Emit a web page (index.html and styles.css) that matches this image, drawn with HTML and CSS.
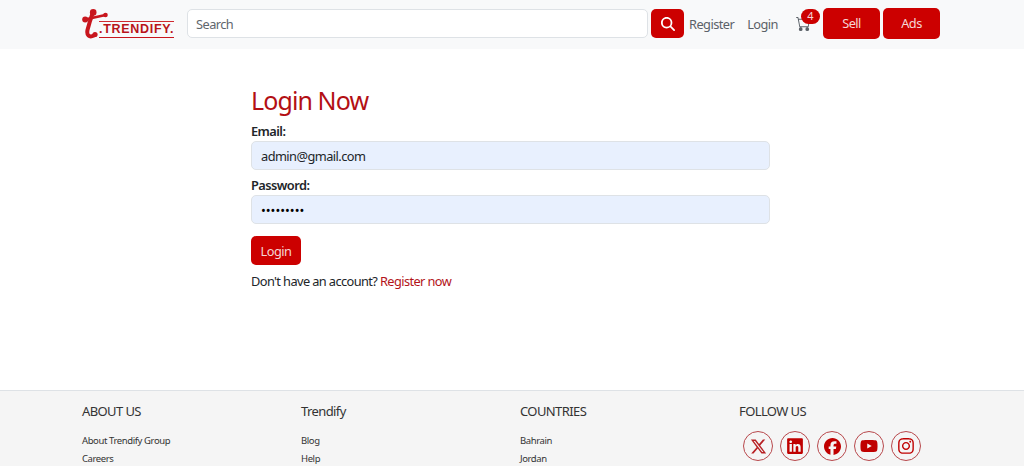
FILE: index.html
```html
<!DOCTYPE html>
<html lang="en">
<head>
<meta charset="utf-8">
<title>Login - Trendify</title>
<link rel="stylesheet" href="styles.css">
</head>
<body>
<header class="topbar">
  <a class="logo" href="#">
    <svg class="logo-mark" viewBox="0 0 26 30" width="26" height="30" aria-hidden="true">
      <path d="M11 3 L8 12 L5.500 21 C4.500 26 7 29 12 26.500" fill="none" stroke="#c8161d" stroke-width="4" stroke-linecap="round"/>
      <path d="M3 10.500 L23.500 6" fill="none" stroke="#c8161d" stroke-width="2.800" stroke-linecap="round"/>
      <circle cx="11.200" cy="3.400" r="3.300" fill="#c8161d"/>
      <circle cx="3.200" cy="10.500" r="3" fill="#c8161d"/>
      <circle cx="23.500" cy="6" r="2.300" fill="#c8161d"/>
      <circle cx="13" cy="25.500" r="2.600" fill="#c8161d"/>
    </svg>
    <span class="logo-word">.TRENDIFY.</span>
  </a>
  <form class="search">
    <input class="search-input" type="text" placeholder="Search">
    <button class="search-btn" type="button" aria-label="Search">
      <svg viewBox="0 0 512 512" width="14" height="14"><path fill="#fff" d="M416 208c0 45.900-14.900 88.300-40 122.700L502.600 457.400c12.500 12.500 12.500 32.800 0 45.300s-32.800 12.500-45.300 0L330.700 376c-34.400 25.200-76.800 40-122.700 40C93.100 416 0 322.900 0 208S93.100 0 208 0S416 93.100 416 208zM208 352a144 144 0 1 0 0-288 144 144 0 1 0 0 288z"/></svg>
    </button>
  </form>
  <nav class="nav">
    <a class="nav-link nav-link-wide" href="#">Register</a>
    <a class="nav-link" href="#">Login</a>
    <a class="cart" href="#" aria-label="Cart">
      <svg viewBox="0 0 16 16" width="15" height="15"><path fill="#5b6168" d="M0 1.500A.5.500 0 0 1 .5 1H2a.5.500 0 0 1 .485.379L2.890 3H14.500a.5.500 0 0 1 .491.592l-1.500 8A.5.500 0 0 1 13 12H4a.5.500 0 0 1-.491-.408L2.010 3.607 1.610 2H.5a.5.500 0 0 1-.5-.5zM3.102 4l1.313 7h8.170l1.313-7H3.102zM5 12a2 2 0 1 0 0 4 2 2 0 0 0 0-4zm7 0a2 2 0 1 0 0 4 2 2 0 0 0 0-4z"/></svg>
      <span class="badge">4</span>
    </a>
    <a class="nav-btn" href="#">Sell</a>
    <a class="nav-btn" href="#">Ads</a>
  </nav>
</header>

<main class="main">
  <h1 class="title">Login Now</h1>
  <form class="login">
    <label class="label" for="email">Email:</label>
    <input class="field" id="email" type="email" value="admin@gmail.com">
    <label class="label" for="pw">Password:</label>
    <input class="field field-secret" id="pw" type="password" value="123456789">
    <button class="submit" type="button">Login</button>
  </form>
  <p class="note">Don't have an account? <a class="note-link" href="#">Register now</a></p>
</main>

<footer class="footer">
  <div class="col">
    <h2 class="col-title">ABOUT US</h2>
    <a class="col-link" href="#">About Trendify Group</a>
    <a class="col-link" href="#">Careers</a>
  </div>
  <div class="col">
    <h2 class="col-title">Trendify</h2>
    <a class="col-link" href="#">Blog</a>
    <a class="col-link" href="#">Help</a>
  </div>
  <div class="col">
    <h2 class="col-title">COUNTRIES</h2>
    <a class="col-link" href="#">Bahrain</a>
    <a class="col-link" href="#">Jordan</a>
  </div>
  <div class="col">
    <h2 class="col-title">FOLLOW US</h2>
    <div class="socials">
      <a class="social" href="#" aria-label="X"><svg viewBox="0 0 512 512" width="17" height="17"><path fill="#b82024" d="M389.200 48h70.600L305.600 224.200 487 464H345L233.700 318.600 106.500 464H35.800L200.700 275.500 26.800 48H172.400L272.900 180.900 389.200 48zM364.400 421.800h39.100L151.100 88h-42L364.400 421.800z"/></svg></a>
      <a class="social" href="#" aria-label="LinkedIn"><svg viewBox="0 0 448 512" width="16" height="18"><path fill="#c00000" d="M416 32H31.900C14.300 32 0 46.500 0 64.300v383.400C0 465.500 14.300 480 31.900 480H416c17.600 0 32-14.500 32-32.300V64.300c0-17.800-14.400-32.300-32-32.300zM135.400 416H69V202.200h66.500V416zm-33.200-243c-21.300 0-38.500-17.300-38.500-38.500S80.900 96 102.200 96c21.200 0 38.500 17.300 38.500 38.500 0 21.300-17.200 38.500-38.500 38.500zm282.100 243h-66.400V312c0-24.800-.5-56.700-34.500-56.700-34.600 0-39.900 27-39.900 54.900V416h-66.400V202.200h63.700v29.200h.9c8.900-16.800 30.600-34.500 62.900-34.500 67.200 0 79.700 44.300 79.700 101.900V416z"/></svg></a>
      <a class="social" href="#" aria-label="Facebook"><svg viewBox="0 0 512 512" width="17" height="17"><path fill="#c00000" d="M512 256C512 114.600 397.400 0 256 0S0 114.600 0 256C0 376 82.700 476.800 194.200 504.500V334.200H141.400V256h52.800V222.300c0-87.100 39.400-127.500 125-127.500c16.200 0 44.200 3.200 55.700 6.400V172c-6-.6-16.500-1-29.600-1c-42 0-58.200 15.900-58.200 57.200V256h83.600l-14.400 78.200H287V510.100C413.800 494.800 512 386.900 512 256z"/></svg></a>
      <a class="social" href="#" aria-label="YouTube"><svg viewBox="0 0 576 512" width="18" height="16"><path fill="#c00000" d="M549.700 124.100c-6.300-23.700-24.800-42.300-48.300-48.600C458.800 64 288 64 288 64S117.200 64 74.600 75.500c-23.500 6.300-42 24.900-48.300 48.600-11.400 42.900-11.400 132.300-11.400 132.300s0 89.400 11.400 132.300c6.300 23.700 24.800 41.500 48.300 47.800C117.200 448 288 448 288 448s170.800 0 213.400-11.500c23.500-6.300 42-24.200 48.300-47.800 11.400-42.900 11.400-132.300 11.400-132.300s0-89.400-11.400-132.300zm-317.500 213.500V175.200l142.700 81.200-142.700 81.200z"/></svg></a>
      <a class="social" href="#" aria-label="Instagram"><svg viewBox="0 0 448 512" width="16" height="18"><path fill="#c00000" d="M224.100 141c-63.600 0-114.900 51.300-114.900 114.900s51.300 114.900 114.900 114.900S339 319.500 339 255.900 287.700 141 224.100 141zm0 189.600c-41.100 0-74.700-33.500-74.700-74.700s33.500-74.700 74.700-74.700 74.700 33.500 74.700 74.700-33.600 74.700-74.700 74.700zm146.400-194.300c0 14.900-12 26.800-26.800 26.800-14.900 0-26.800-12-26.800-26.800s12-26.800 26.800-26.800 26.800 12 26.800 26.800zm76.100 27.200c-1.700-35.900-9.900-67.700-36.200-93.900-26.200-26.200-58-34.400-93.900-36.200-37-2.100-147.900-2.100-184.900 0-35.800 1.700-67.600 9.900-93.900 36.100s-34.400 58-36.200 93.900c-2.100 37-2.100 147.900 0 184.900 1.700 35.900 9.900 67.700 36.200 93.900s58 34.400 93.900 36.200c37 2.100 147.900 2.100 184.900 0 35.900-1.700 67.700-9.900 93.900-36.200 26.200-26.200 34.400-58 36.200-93.900 2.100-37 2.100-147.800 0-184.800zM398.800 388c-7.800 19.600-22.900 34.700-42.600 42.600-29.500 11.700-99.500 9-132.100 9s-102.700 2.600-132.100-9c-19.600-7.800-34.700-22.900-42.600-42.600-11.700-29.500-9-99.500-9-132.100s-2.600-102.700 9-132.100c7.800-19.600 22.900-34.700 42.600-42.600 29.500-11.700 99.500-9 132.100-9s102.700-2.600 132.100 9c19.600 7.800 34.700 22.900 42.600 42.600 11.700 29.500 9 99.500 9 132.100s2.700 102.700-9 132.100z"/></svg></a>
    </div>
  </div>
</footer>
</body>
</html>
```
FILE: styles.css
```css
* { box-sizing: border-box; }
html, body { height: 100%; }
body {
  margin: 0;
  height: 466px;
  overflow: hidden;
  font-family: "Noto Sans", sans-serif;
  font-size: 12.8px;
  letter-spacing: -0.55px;
  color: #212529;
  background: #fff;
}
a { text-decoration: none; color: inherit; }

.topbar {
  height: 49px;
  background: #f8f9fa;
  display: flex;
  align-items: center;
  padding: 0 84px 2px 82px;
}
.logo {
  width: 93px;
  height: 30px;
  margin-right: 12px;
  display: flex;
  position: relative;
  flex: none;
}
.logo-mark { position: absolute; left: 0; top: 0; }
.logo-word {
  position: absolute;
  left: 17px;
  top: 12px;
  width: 75px;
  height: 17px;
  border-top: 1.5px solid #cf2a30;
  border-bottom: 1.5px solid #c8161d;
  font-family: "Liberation Sans", sans-serif;
  font-weight: 700;
  font-size: 12.5px;
  line-height: 14px;
  letter-spacing: 0.7px;
  color: #b8141b;
  white-space: nowrap;
}
.search { display: flex; flex: none; gap: 3px; }
.search-input {
  width: 461px;
  height: 29px;
  padding: 0 8px;
  border: 1px solid #dee2e6;
  border-radius: 5px;
  background: #fff;
  font: inherit;
  letter-spacing: inherit;
  outline: none;
}
.search-input::placeholder { color: #5f666d; }
.search-btn {
  width: 33px;
  height: 29px;
  padding: 0;
  border: 0;
  border-radius: 5px;
  background: #cc0000;
  display: flex;
  align-items: center;
  justify-content: center;
}
.nav { display: flex; align-items: center; margin-left: 5px; }
.nav-link { color: #5b6168; margin-right: 12px; }
.nav-link-wide { margin-right: 13px; }
.cart {
  position: relative;
  display: flex;
  margin: 0 12px 0 6px;
  width: 15px;
}
.badge {
  position: absolute;
  left: 5px;
  top: -7px;
  width: 19px;
  height: 15px;
  border-radius: 8px;
  background: #cc0000;
  color: #f5d6d6;
  font-size: 11px;
  line-height: 14px;
  letter-spacing: 0;
  text-align: center;
}
.nav-btn {
  width: 57px;
  height: 31px;
  border-radius: 5px;
  background: #cc0000;
  color: #f5d6d6;
  line-height: 31px;
  text-align: center;
  margin-right: 3px;
}

.main {
  height: 341px;
  padding: 36px 0 0 251px;
}
.title {
  margin: 0 0 7px;
  font-size: 25px;
  line-height: 30px;
  font-weight: 400;
  letter-spacing: -0.9px;
  color: #b30f14;
}
.login { display: flex; flex-direction: column; align-items: flex-start; width: 519px; }
.label {
  line-height: 18px;
  font-weight: 600;
  margin-bottom: 1px;
}
.field {
  width: 100%;
  height: 29px;
  margin-bottom: 6px;
  padding: 0 9px;
  border: 1px solid #dee2e6;
  border-radius: 5px;
  background: #e8f0fe;
  color: #212529;
  font: inherit;
  letter-spacing: inherit;
  outline: none;
}
.field-secret { color: #000; letter-spacing: 0; }
.submit {
  margin-top: 6px;
  width: 50px;
  height: 29px;
  padding: 0;
  border: 0;
  border-radius: 5px;
  background: #cc0000;
  color: #f5d6d6;
  font: inherit;
  letter-spacing: inherit;
}
.note { margin: 7px 0 0; line-height: 18px; letter-spacing: -0.6px; }
.note-link { color: #b3141a; }

.footer {
  height: 76px;
  border-top: 1px solid #dee2e6;
  background: #f5f5f5;
  padding: 11px 0 0 82px;
  display: grid;
  grid-template-columns: repeat(4, 219px);
  overflow: hidden;
}
.col { display: flex; flex-direction: column; align-items: flex-start; }
.col-title {
  margin: 0 0 12px;
  font-size: 13px;
  line-height: 18px;
  font-weight: 400;
  letter-spacing: -0.6px;
  color: #333;
}
.col-link { font-size: 9.5px; line-height: 18px; letter-spacing: -0.4px; color: #333; }
.socials { display: flex; gap: 7px; padding-left: 4px; margin-top: -1px; }
.social {
  width: 30px;
  height: 30px;
  border: 1px solid #b8484c;
  border-radius: 50%;
  display: flex;
  align-items: center;
  justify-content: center;
}
```
